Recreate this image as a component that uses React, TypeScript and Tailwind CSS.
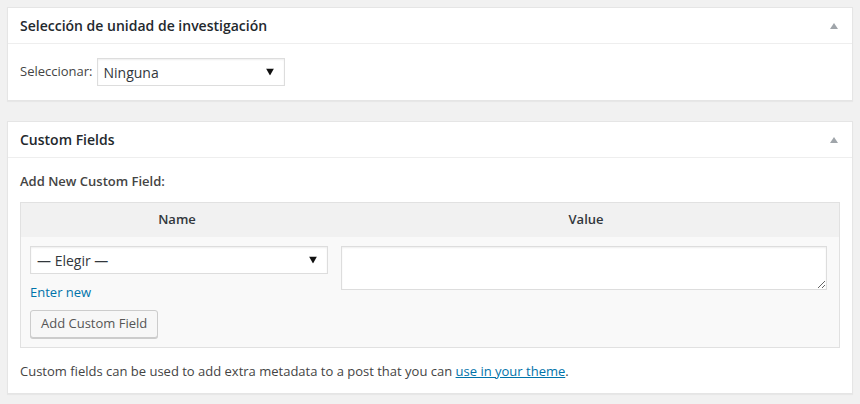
import React, { useState } from "react";

// Small grey "collapse" arrow shown on the right of each metabox header
const ToggleArrow: React.FC = () => (
  <svg width="10" height="8" viewBox="0 0 10 8" className="text-[#a0a5aa]">
    <path d="M5 1 L9 7 L1 7 Z" fill="currentColor" />
  </svg>
);

const SelectBox: React.FC<{
  value: string;
  options: string[];
  onChange: (v: string) => void;
  className?: string;
}> = ({ value, options, onChange, className }) => (
  <div className={`relative ${className ?? ""}`}>
    <select
      value={value}
      onChange={(e) => onChange(e.target.value)}
      className="block h-full w-full appearance-none rounded-none border border-[#ddd] bg-white pl-[6px] pr-6 text-[14px] text-[#32373c] shadow-[inset_0_1px_2px_rgba(0,0,0,0.07)] outline-none"
    >
      {options.map((o) => (
        <option key={o} value={o}>
          {o}
        </option>
      ))}
    </select>
    <svg
      width="8"
      height="7"
      viewBox="0 0 8 7"
      className="pointer-events-none absolute right-[11px] top-1/2 -translate-y-1/2"
    >
      <path d="M0 0 H8 L4 7 Z" fill="#111" />
    </svg>
  </div>
);

const MetaBox: React.FC<{ title: string; children: React.ReactNode }> = ({ title, children }) => (
  <div className="mx-[7px] border border-[#e5e5e5] bg-white shadow-[0_1px_1px_rgba(0,0,0,0.04)]">
    <div className="flex h-[36px] items-center justify-between border-b border-[#eee] pl-3 pr-[13px]">
      <h2 className="text-[14px] font-semibold text-[#23282d]">{title}</h2>
      <ToggleArrow />
    </div>
    {children}
  </div>
);

export default function App() {
  const [unit, setUnit] = useState("Ninguna");
  const [key, setKey] = useState("— Elegir —");
  const [val, setVal] = useState("");

  return (
    <div
      className="min-h-[404px] bg-[#f1f1f1] pt-[7px] text-[13px] text-[#444]"
      style={{ fontFamily: '"Open Sans", "Noto Sans", sans-serif' }}
    >
      <MetaBox title="Selección de unidad de investigación">
        <div className="flex items-center gap-[4px] px-3 pb-[14px] pt-[14px]">
          <span className="text-[13px] text-[#444]">Seleccionar:</span>
          <SelectBox
            value={unit}
            onChange={setUnit}
            options={["Ninguna"]}
            className="h-[28px] w-[188px]"
          />
        </div>
      </MetaBox>

      <div className="h-[20px]" />

      <MetaBox title="Custom Fields">
        <div className="px-3 pb-[13px] pt-[14px]">
          <p className="mb-[12px] h-[18px] font-semibold leading-[18px] text-[#444]">Add New Custom Field:</p>

          <div className="border border-[#e1e1e1] bg-[#f9f9f9]">
            <div className="flex h-[34px] items-center bg-[#f1f1f1] font-semibold text-[#32373c]">
              <div className="w-[312px] text-center">Name</div>
              <div className="flex-1 text-center">Value</div>
            </div>
            <div className="flex pb-[9px] pt-[9px]">
              <div className="flex w-[312px] flex-col items-start pl-[9px] pr-[5px]">
                <SelectBox value={key} onChange={setKey} options={["— Elegir —"]} className="h-[28px] w-full" />
                <a href="#" className="mt-[9px] leading-[18px] text-[#0073aa]">
                  Enter new
                </a>
                <button className="mt-[9px] h-[28px] whitespace-nowrap rounded-[3px] border border-[#ccc] bg-[#f7f7f7] px-[10px] text-[13px] text-[#555] shadow-[0_1px_0_#ccc]">
                  Add Custom Field
                </button>
              </div>
              <div className="flex-1 pl-[8px] pr-[12px]">
                <textarea
                  value={val}
                  onChange={(e) => setVal(e.target.value)}
                  className="block h-[44px] w-full border border-[#ddd] bg-white shadow-[inset_0_1px_2px_rgba(0,0,0,0.07)] outline-none"
                />
              </div>
            </div>
          </div>

          <p className="mt-[14px] leading-[18px]">
            Custom fields can be used to add extra metadata to a post that you can{" "}
            <a href="#" className="text-[#0073aa] underline">
              use in your theme
            </a>
            .
          </p>
        </div>
      </MetaBox>
    </div>
  );
}
